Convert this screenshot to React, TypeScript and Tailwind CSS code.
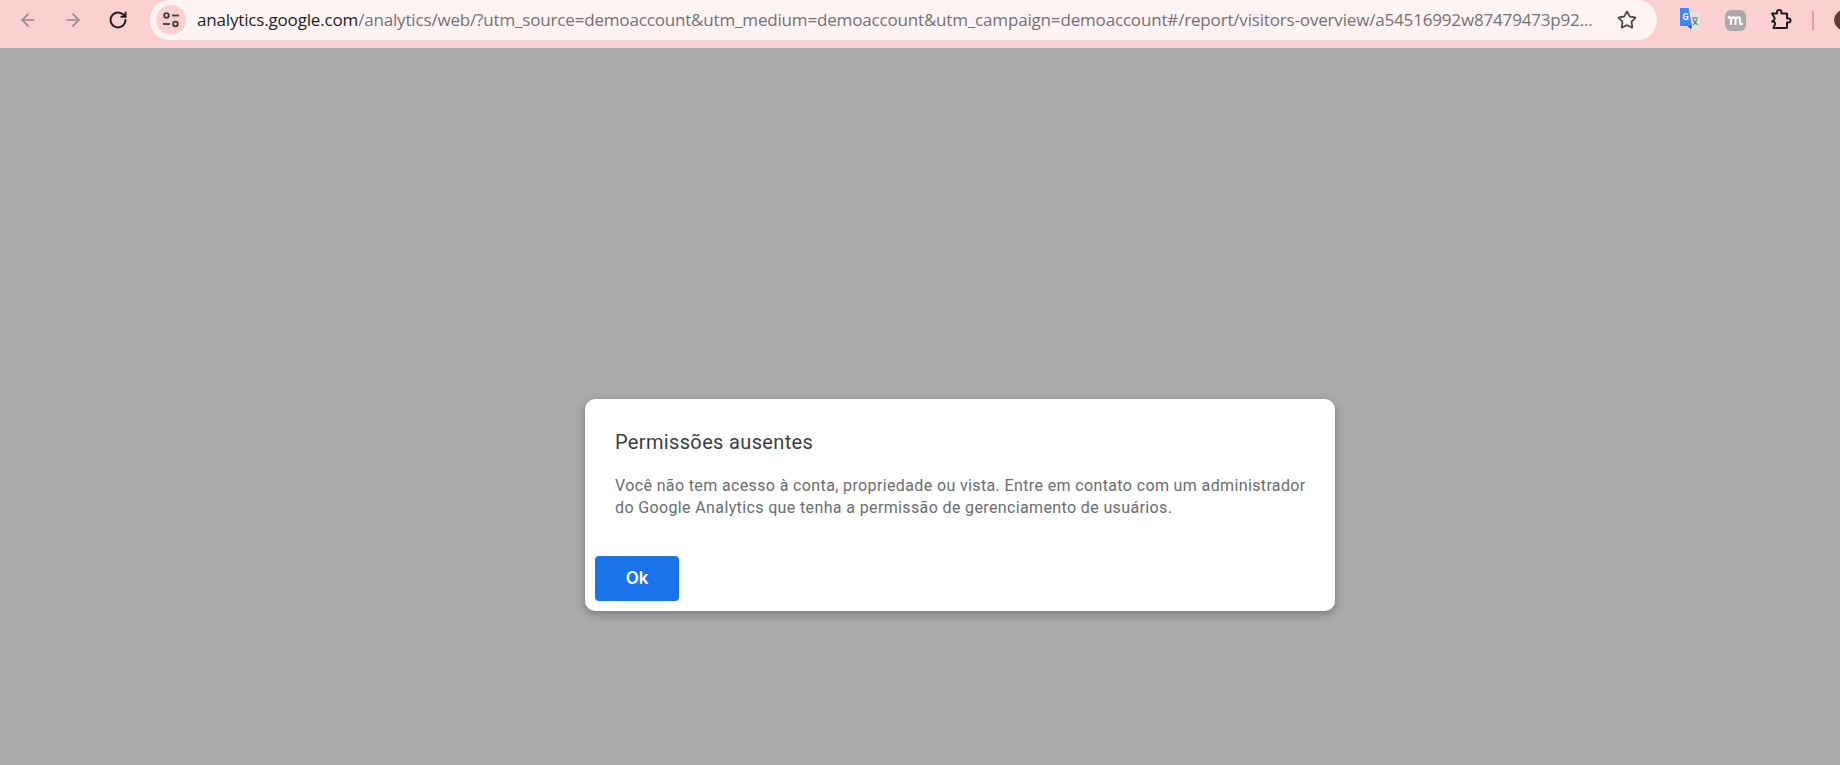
import { ArrowLeft, ArrowRight, RotateCw, Star } from "lucide-react";

const URL_HOST = "analytics.google.com";
const URL_REST =
  "/analytics/web/?utm_source=demoaccount&utm_medium=demoaccount&utm_campaign=demoaccount#/report/visitors-overview/a54516992w87479473p92...";

function SiteControls() {
  return (
    <svg width="18" height="18" viewBox="0 0 18 18" fill="none" stroke="#3c3c3c" strokeWidth="1.8">
      <circle cx="4.500" cy="4.500" r="2.300" />
      <path d="M10 4.500h7" />
      <path d="M1 13h7" />
      <circle cx="13.500" cy="13" r="2.300" />
    </svg>
  );
}

function TranslateIcon() {
  return (
    <svg width="22" height="24" viewBox="0 0 22 24">
      <rect x="9" y="4" width="12" height="17" fill="#e3e3e3" />
      <path d="M13 10h6M16 9v1.500M14 11c1 3 3 5 5 6M18 11c-.7 3-2.400 5-4 6" stroke="#6f7d7a" strokeWidth="1.200" fill="none" />
      <path d="M1 0h8.500l3.500 18H1z" fill="#4285f4" />
      <path d="M10.500 18H13l-1 3.500-3.500-3.500z" fill="#2a56c6" />
      <text x="3.500" y="12" fontSize="9" fontWeight="700" fill="#fff" fontFamily="Roboto, sans-serif">
        G
      </text>
    </svg>
  );
}

function MozIcon() {
  return (
    <svg width="21" height="21" viewBox="0 0 21 21" fill="none">
      <rect width="21" height="21" rx="6" fill="#a9a9a9" />
      <path
        d="M3.500 7.500c1.500-1 2.500 0 2.500 1.500v5M6 9c.5-2 4.500-2.500 4.500 0v5M10.500 9c.5-2 4.500-2.500 4.500 0v3.500c0 1.500 1 2 2 1.500"
        stroke="#fff"
        strokeWidth="2.200"
        strokeLinecap="round"
        strokeLinejoin="round"
      />
    </svg>
  );
}

function PuzzleIcon() {
  return (
    <svg width="22" height="22" viewBox="0 0 22 22" fill="none" stroke="#1f1f1f" strokeWidth="2" strokeLinejoin="round">
      <path d="M2 4.500h5V3.200a2.200 2.200 0 0 1 4.400 0v1.300H17v5h1.500a2 2 0 0 1 0 4H17v5.500H3.500l.8-2.500a2.300 2.300 0 0 0 0-3.500L2 12.500l2-1.500a2 2 0 0 0 0-3z" />
    </svg>
  );
}

export default function App() {
  return (
    <div className="flex h-[765px] w-[1840px] flex-col overflow-hidden bg-[#ababab]">
      {/* Barra do navegador */}
      <header className="flex h-[48px] shrink-0 items-start bg-[#fbd0d0]">
        <div className="flex h-[40px] w-[150px] shrink-0 items-center pl-[18px] text-[#9b8788]">
          <ArrowLeft size={20} strokeWidth={2} />
          <ArrowRight size={20} strokeWidth={2} className="ml-[25px]" />
          <RotateCw size={20} strokeWidth={2.400} className="ml-[25px] text-[#1f1f1f]" />
        </div>

        <div className="flex h-[40px] w-[1507px] shrink-0 items-center rounded-full bg-[#fff3f3] pl-[6px]">
          <div className="flex h-[30px] w-[30px] shrink-0 items-center justify-center rounded-full bg-[#fbd0d0]">
            <SiteControls />
          </div>
          <div className="ml-[11px] w-[1400px] shrink-0 font-['Open_Sans',sans-serif] text-[17px] tracking-[-0.17px] whitespace-nowrap text-[#727277]">
            <span className="text-[#1f1f1f]">{URL_HOST}</span>
            {URL_REST}
          </div>
          <Star size={20} strokeWidth={2.200} className="ml-[20px] text-[#4f4f4f]" />
        </div>

        <div className="flex h-[40px] items-center">
          <div className="ml-[22px] flex w-[22px] justify-center">
            <TranslateIcon />
          </div>
          <div className="ml-[24px]">
            <MozIcon />
          </div>
          <div className="ml-[24px]">
            <PuzzleIcon />
          </div>
          <div className="ml-[20px] h-[19px] w-[2px] bg-[#f19a98]" />
          <div className="ml-[20px] h-[20px] w-[20px] rounded-full bg-[#5e3b36]" />
        </div>
      </header>

      {/* Diálogo */}
      <main className="flex-1 pt-[351px] pl-[585px]">
        <div className="flex h-[212px] w-[750px] flex-col rounded-[10px] bg-white shadow-[0_3px_10px_rgba(0,0,0,0.3)]">
          <h2 className="mt-[31px] ml-[30px] font-['Roboto',sans-serif] text-[20px] leading-[24px] font-normal tracking-[0.35px] text-[#3c4043]">
            Permissões ausentes
          </h2>
          <p className="mt-[21px] ml-[30px] w-[710px] font-['Roboto',sans-serif] text-[16px] leading-[22px] tracking-[0.37px] text-[#6a6d71]">
            Você não tem acesso à conta, propriedade ou vista. Entre em contato com um administrador
            <br />
            do Google Analytics que tenha a permissão de gerenciamento de usuários.
          </p>
          <button
            type="button"
            className="mt-auto mb-[10px] ml-[10px] h-[45px] w-[84px] rounded-[4px] bg-[#1a73e8] font-['Inter',sans-serif] text-[17px] font-semibold text-white"
          >
            Ok
          </button>
        </div>
      </main>
    </div>
  );
}
